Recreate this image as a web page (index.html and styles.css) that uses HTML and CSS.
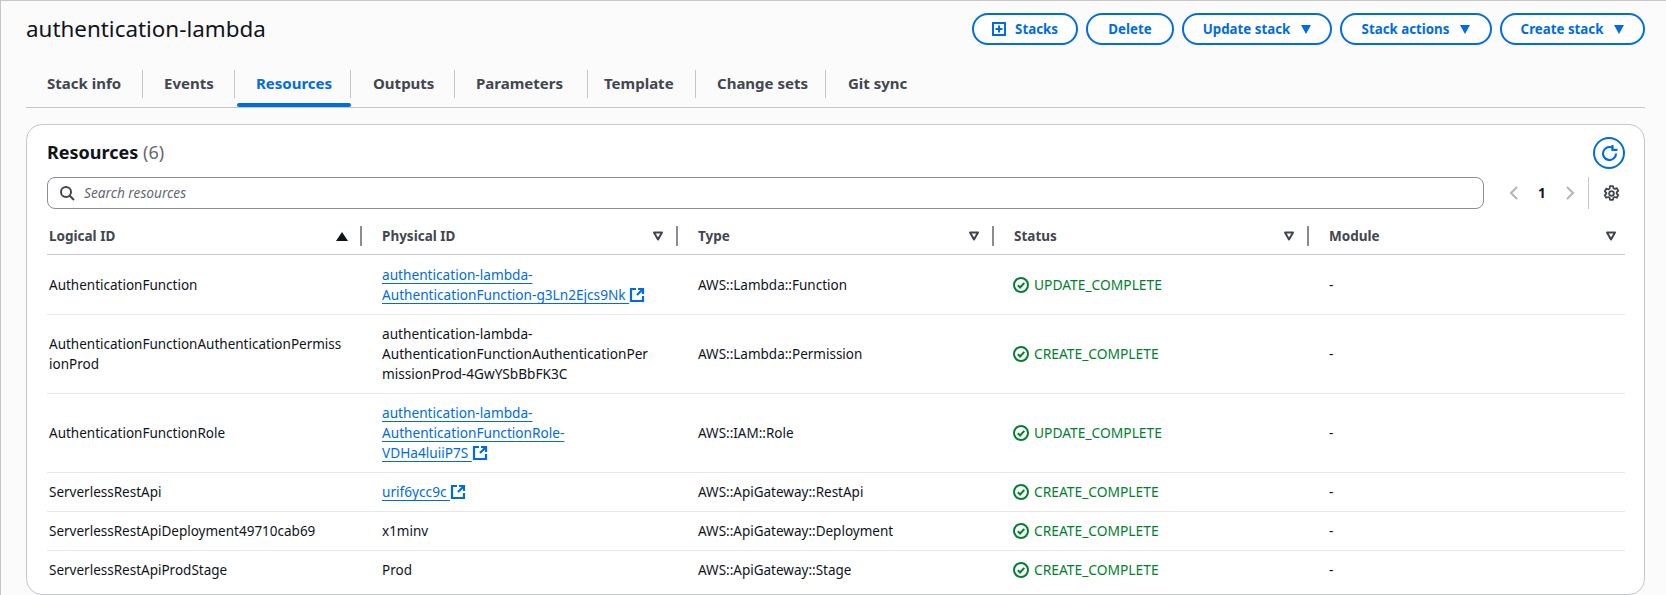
FILE: index.html
```html
<!DOCTYPE html>
<html lang="en">
<head>
    <meta charset="UTF-8">
    <meta name="viewport" content="width=device-width, initial-scale=1.0">
    <title>authentication-lambda</title>
    <link rel="stylesheet" href="styles.css">
</head>
<body>
    <svg class="icon-defs" width="0" height="0">
        <symbol id="ext" viewBox="0 0 16 16">
            <path d="M7 2H2v12h12V9M9 2h5v5M14 2L8 8" fill="none" stroke="currentColor" stroke-width="2.2"/>
        </symbol>
        <symbol id="ok" viewBox="0 0 16 16">
            <circle cx="8" cy="8" r="7" fill="none" stroke="currentColor" stroke-width="2"/>
            <path d="M4.8 8.2l2.3 2.3 4.2-4.6" fill="none" stroke="currentColor" stroke-width="2"/>
        </symbol>
        <symbol id="filter" viewBox="0 0 12 12">
            <path d="M2 2.500h8L6 9.500z" fill="none" stroke="currentColor" stroke-width="2" stroke-linejoin="round"/>
        </symbol>
    </svg>

    <div class="page">
        <header class="top">
            <h1>authentication-lambda</h1>
            <div class="actions">
                <button class="btn btn-stacks">
                    <svg class="btn-icon" viewBox="1 1 14 14"><path d="M2 2h12v12H2z M8 4.500v7M4.500 8h7" fill="none" stroke="currentColor" stroke-width="2"/></svg>
                    Stacks
                </button>
                <button class="btn btn-delete">Delete</button>
                <button class="btn btn-update">Update stack <span class="caret"></span></button>
                <button class="btn btn-actions">Stack actions <span class="caret"></span></button>
                <button class="btn btn-create">Create stack <span class="caret"></span></button>
            </div>
        </header>

        <nav class="tabs">
            <a class="tab tab-info">Stack info</a>
            <a class="tab tab-events">Events</a>
            <a class="tab tab-resources active">Resources</a>
            <a class="tab tab-outputs">Outputs</a>
            <a class="tab tab-params">Parameters</a>
            <a class="tab tab-template">Template</a>
            <a class="tab tab-changes">Change sets</a>
            <a class="tab tab-git">Git sync</a>
        </nav>

        <section class="card">
            <div class="card-head">
                <h2>Resources <span class="count">(6)</span></h2>
                <button class="refresh">
                    <svg viewBox="0 0 16 16" width="19" height="19"><path d="M13.5 8A5.500 5.500 0 1 1 11 3.400" fill="none" stroke="currentColor" stroke-width="1.800"/><path d="M10.500 0.800V5h4.200" fill="none" stroke="currentColor" stroke-width="1.800"/></svg>
                </button>
            </div>
            <div class="tools">
                <div class="search">
                    <svg viewBox="0 0 16 16" width="16" height="16"><circle cx="7" cy="7" r="5" fill="none" stroke="currentColor" stroke-width="2"/><path d="M10.500 10.500L15 15" stroke="currentColor" stroke-width="2"/></svg>
                    <span>Search resources</span>
                </div>
                <div class="pager">
                    <svg viewBox="0 0 10 16" width="10" height="16"><path d="M8 2L2 8l6 6" fill="none" stroke="currentColor" stroke-width="2"/></svg>
                    <b>1</b>
                    <svg viewBox="0 0 10 16" width="10" height="16"><path d="M2 2l6 6-6 6" fill="none" stroke="currentColor" stroke-width="2"/></svg>
                </div>
                <div class="gear">
                    <svg viewBox="0 0 16 16" width="17" height="17"><circle cx="8" cy="8" r="2.200" fill="none" stroke="currentColor" stroke-width="1.700"/><path d="M6.600 1h2.800l.4 2 1.300.7 1.900-.7 1.400 2.500-1.500 1.300v1.400l1.500 1.300-1.400 2.500-1.900-.7-1.300.7-.4 2H6.600l-.4-2-1.300-.7-1.900.7-1.400-2.500 1.500-1.300V7.300L1.600 6 3 3.500l1.900.7 1.300-.7z" fill="none" stroke="currentColor" stroke-width="1.700" stroke-linejoin="round"/></svg>
                </div>
            </div>

            <table class="res">
                <colgroup>
                    <col class="c-logical"><col class="c-physical"><col class="c-type"><col class="c-status"><col class="c-module">
                </colgroup>
                <thead>
                    <tr>
                        <th><div class="th">Logical ID <span class="sorted"></span></div></th>
                        <th><div class="th">Physical ID <svg class="fil"><use href="#filter"/></svg></div></th>
                        <th><div class="th">Type <svg class="fil"><use href="#filter"/></svg></div></th>
                        <th><div class="th">Status <svg class="fil"><use href="#filter"/></svg></div></th>
                        <th><div class="th last">Module <svg class="fil"><use href="#filter"/></svg></div></th>
                    </tr>
                </thead>
                <tbody>
                    <tr>
                        <td>AuthenticationFunction</td>
                        <td><a class="link">authentication-lambda-<br>AuthenticationFunction-g3Ln2Ejcs9Nk&nbsp;</a><svg class="ext"><use href="#ext"/></svg></td>
                        <td>AWS::Lambda::Function</td>
                        <td><span class="status"><svg class="ok"><use href="#ok"/></svg>UPDATE_COMPLETE</span></td>
                        <td>-</td>
                    </tr>
                    <tr>
                        <td>AuthenticationFunctionAuthenticationPermiss<br>ionProd</td>
                        <td class="physical">authentication-lambda-<br>AuthenticationFunctionAuthenticationPer<br>missionProd-4GwYSbBbFK3C</td>
                        <td>AWS::Lambda::Permission</td>
                        <td><span class="status"><svg class="ok"><use href="#ok"/></svg>CREATE_COMPLETE</span></td>
                        <td>-</td>
                    </tr>
                    <tr>
                        <td>AuthenticationFunctionRole</td>
                        <td><a class="link">authentication-lambda-<br>AuthenticationFunctionRole-<br>VDHa4luiiP7S&nbsp;</a><svg class="ext"><use href="#ext"/></svg></td>
                        <td>AWS::IAM::Role</td>
                        <td><span class="status"><svg class="ok"><use href="#ok"/></svg>UPDATE_COMPLETE</span></td>
                        <td>-</td>
                    </tr>
                    <tr>
                        <td>ServerlessRestApi</td>
                        <td><a class="link">urif6ycc9c&nbsp;</a><svg class="ext"><use href="#ext"/></svg></td>
                        <td>AWS::ApiGateway::RestApi</td>
                        <td><span class="status"><svg class="ok"><use href="#ok"/></svg>CREATE_COMPLETE</span></td>
                        <td>-</td>
                    </tr>
                    <tr>
                        <td>ServerlessRestApiDeployment49710cab69</td>
                        <td>x1minv</td>
                        <td>AWS::ApiGateway::Deployment</td>
                        <td><span class="status"><svg class="ok"><use href="#ok"/></svg>CREATE_COMPLETE</span></td>
                        <td>-</td>
                    </tr>
                    <tr>
                        <td>ServerlessRestApiProdStage</td>
                        <td>Prod</td>
                        <td>AWS::ApiGateway::Stage</td>
                        <td><span class="status"><svg class="ok"><use href="#ok"/></svg>CREATE_COMPLETE</span></td>
                        <td>-</td>
                    </tr>
                </tbody>
            </table>
        </section>
    </div>
</body>
</html>
```

FILE: styles.css
```css
html, body {
    margin: 0;
    height: 595px;
    overflow: hidden;
}
body {
    background-color: #fbfbfb;
    color: #0f141a;
    font-family: "Noto Sans", sans-serif;
    font-size: 13.5px;
    line-height: 20px;
}
.icon-defs {
    position: absolute;
}
.page {
    box-sizing: border-box;
    height: 595px;
    border-top: 1px solid #c6c6cd;
    border-left: 1px solid #c6c6cd;
    padding: 12px 21px 0 25px;
}

/* header */
.top {
    display: flex;
    justify-content: space-between;
    align-items: center;
    height: 32px;
}
h1 {
    margin: 0;
    font-size: 22.4px;
    font-weight: 400;
    line-height: 30px;
}
.actions {
    display: flex;
    gap: 8px;
}
.btn {
    box-sizing: border-box;
    display: flex;
    align-items: center;
    justify-content: center;
    gap: 9px;
    height: 32px;
    border: 2px solid #006ce0;
    border-radius: 20px;
    background: #fff;
    color: #006ce0;
    font-family: inherit;
    font-size: 13.3px;
    font-weight: 700;
    padding: 0;
}
.btn-stacks { width: 106px; }
.btn-delete { width: 88px; }
.btn-update { width: 150px; }
.btn-actions { width: 152px; }
.btn-create { width: 145px; }
.btn-icon {
    width: 14px;
    height: 14px;
}
.caret {
    width: 0;
    height: 0;
    margin-left: 2px;
    border-left: 5.5px solid transparent;
    border-right: 5.5px solid transparent;
    border-top: 9px solid #006ce0;
}

/* tabs */
.tabs {
    display: flex;
    height: 44px;
    margin-top: 19px;
    margin-bottom: 16px;
    border-bottom: 1px solid #c6c6cd;
    box-sizing: border-box;
}
.tab {
    box-sizing: border-box;
    height: 43px;
    padding: 9px 0 0 21px;
    font-size: 15px;
    font-weight: 700;
    color: #424650;
    line-height: 20px;
    position: relative;
}
.tab::after {
    content: "";
    position: absolute;
    right: 0;
    top: 6px;
    height: 28px;
    width: 1px;
    background: #c6c6cd;
}
.tab-git::after { display: none; }
.tab-info { width: 117px; }
.tab-events { width: 92px; }
.tab-resources { width: 116px; }
.tab-outputs { width: 104px; padding-left: 22px; }
.tab-params { width: 133px; }
.tab-template { width: 108px; padding-left: 16px; }
.tab-changes { width: 130px; }
.tab-git { width: 120px; padding-left: 22px; }
.tab.active {
    color: #006ce0;
}
.tab.active::before {
    content: "";
    position: absolute;
    left: 2px;
    right: 0;
    bottom: 0;
    height: 4px;
    border-radius: 2px;
    background: #006ce0;
}

/* card */
.card {
    box-sizing: border-box;
    height: 471px;
    border: 1px solid #c6c6cd;
    border-radius: 16px;
    background: #fff;
    padding: 12px 19px 0 20px;
}
.card-head {
    display: flex;
    justify-content: space-between;
    align-items: center;
    height: 32px;
}
h2 {
    margin: 0 0 2px;
    font-size: 18px;
    font-weight: 700;
    line-height: 22px;
}
.count {
    color: #656871;
    font-weight: 400;
}
.refresh {
    box-sizing: border-box;
    display: flex;
    align-items: center;
    justify-content: center;
    width: 32px;
    height: 32px;
    border: 2px solid #006ce0;
    border-radius: 50%;
    background: #fff;
    color: #006ce0;
    padding: 0;
}
.tools {
    display: flex;
    align-items: center;
    height: 32px;
    margin-top: 8px;
}
.search {
    box-sizing: border-box;
    display: flex;
    align-items: center;
    gap: 9px;
    width: 1437px;
    height: 32px;
    padding-left: 11px;
    border: 1px solid #8c8c94;
    border-radius: 8px;
    color: #424650;
}
.search span {
    font-style: italic;
    font-size: 13.7px;
    color: #656871;
}
.pager {
    display: flex;
    align-items: center;
    gap: 19px;
    margin-left: 25px;
    color: #b4b4bb;
}
.pager b {
    color: #0f141a;
    font-weight: 700;
}
.gear {
    display: flex;
    align-items: center;
    justify-content: center;
    height: 32px;
    margin-left: 13px;
    padding-left: 14px;
    border-left: 1px solid #c6c6cd;
    color: #424650;
}

/* table */
.res {
    border-collapse: collapse;
    table-layout: fixed;
    width: 1578px;
    margin-top: 7px;
}
.c-logical { width: 334px; }
.c-physical { width: 316px; }
.c-type { width: 316px; }
.c-status { width: 315px; }
.c-module { width: 297px; }
th {
    height: 36px;
    padding: 2px 0 0;
    border-bottom: 1px solid #c6c6cd;
    text-align: left;
    font-weight: 700;
    color: #424650;
}
.th {
    box-sizing: border-box;
    display: flex;
    justify-content: space-between;
    align-items: center;
    height: 20px;
    padding: 0 12px 0 1px;
    border-right: 2px solid #8c8c94;
    margin-right: 19px;
}
th:first-child .th,
td:first-child {
    padding-left: 2px;
}
.th.last {
    border-right: none;
    margin-right: 0;
    padding-right: 8px;
}
.sorted {
    width: 0;
    height: 0;
    border-left: 6px solid transparent;
    border-right: 6px solid transparent;
    border-bottom: 9px solid #0f141a;
}
.fil {
    width: 12px;
    height: 12px;
    color: #424650;
}
td {
    padding: 9px 20px 9px 1px;
    border-bottom: 1px solid #e8e8ea;
    vertical-align: middle;
    line-height: 20px;
}
tbody tr:first-child td {
    padding-top: 10px;
}
tr:last-child td {
    border-bottom: none;
}
.link,
.physical {
    font-size: 13.65px;
}
.link {
    color: #006ce0;
    text-decoration: underline;
    text-underline-offset: 3px;
}
.ext {
    display: inline-block;
    width: 16px;
    height: 16px;
    color: #006ce0;
    vertical-align: top;
    margin-top: 2px;
}
.status {
    display: flex;
    align-items: center;
    gap: 5px;
    height: 20px;
    margin-left: -1px;
    font-size: 13.8px;
    color: #00802f;
}
.ok {
    width: 16px;
    height: 16px;
}
```
